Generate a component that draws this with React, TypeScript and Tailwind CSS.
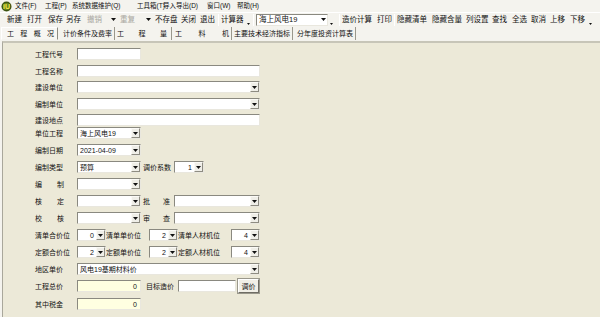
import React from "react";

const Tri = () => (
  <svg width="5" height="3" viewBox="0 0 5 3">
    <path d="M0 0h5L2.5 3z" fill="#111" />
  </svg>
);

const Arrow = () => (
  <span className="flex h-full w-[9px] shrink-0 items-center justify-center border border-t-[#fbfaf6] border-l-[#fbfaf6] border-r-[#8e8c82] border-b-[#8e8c82] bg-[#efeee8]">
    <Tri />
  </span>
);

const Select = ({ w, value, right }: { w: string; value?: string; right?: boolean }) => (
  <div
    className={`flex h-[12px] ${w} shrink-0 border border-t-[#8a8980] border-l-[#8a8980] border-r-[#e9e7de] border-b-[#e9e7de] bg-white`}
  >
    <span className={`flex flex-1 items-center px-[2px] leading-none ${right ? "justify-end" : ""}`}>
      {value}
    </span>
    <Arrow />
  </div>
);

const Input = ({ w, value, yellow }: { w: string; value?: string; yellow?: boolean }) => (
  <div
    className={`flex h-[12px] ${w} shrink-0 items-center justify-end border border-t-[#8a8980] border-l-[#8a8980] border-r-[#e9e7de] border-b-[#e9e7de] px-[3px] leading-none ${
      yellow ? "bg-[#ffffe1]" : "bg-white"
    }`}
  >
    {value}
  </div>
);

const Label = ({ text, w = "w-[42px]", spread }: { text: string; w?: string; spread?: boolean }) => (
  <div className={`flex h-[12px] ${w} shrink-0 items-center leading-none`}>
    {spread ? (
      <span className="flex w-[29px] justify-between">
        {text.split("").map((c, i) => (
          <span key={i}>{c}</span>
        ))}
      </span>
    ) : (
      text
    )}
  </div>
);

const MenuBar = () => {
  const items = [
    ["文件(F)", "w-[30px]"],
    ["工程(P)", "w-[27px]"],
    ["系统数据维护(Q)", "w-[65px]"],
    ["工具箱(T)", "w-[26px]"],
    ["导入导出(D)", "w-[44px]"],
    ["窗口(W)", "w-[30px]"],
    ["帮助(H)", "w-[30px]"],
  ];
  return (
    <div className="flex h-[12px] items-center bg-[#f4f3ee] pl-[1px] text-[6.5px]">
      <svg width="11" height="11" viewBox="0 0 11 11" className="mr-[3px]">
        <circle cx="5.5" cy="5.5" r="5" fill="#3d5410" />
        <circle cx="5.5" cy="5.5" r="3.6" fill="#6b8a1c" />
        <text x="5.5" y="8" textAnchor="middle" fontSize="7" fontWeight="bold" fill="#f3e24a" fontFamily="Liberation Sans">
          iU
        </text>
      </svg>
      {items.map(([t, w]) => (
        <span key={t} className={`${w} shrink-0 whitespace-nowrap leading-none`}>
          {t}
        </span>
      ))}
    </div>
  );
};

const Sep = () => <span className="mx-[2px] h-[12px] w-px shrink-0 border-r border-r-white bg-[#b9b7ab]" />;

const More = () => (
  <span className="flex h-[12px] w-[6px] shrink-0 items-end justify-center pb-[1px]">
    <svg width="3" height="2" viewBox="0 0 3 2">
      <path d="M0 0h3L1.5 2z" fill="#111" />
    </svg>
  </span>
);

const Tool = ({ t, w, gray }: { t: string; w: string; gray?: boolean }) => (
  <span className={`${w} shrink-0 whitespace-nowrap leading-none ${gray ? "text-[#a8a7a0]" : ""}`}>{t}</span>
);

const Toolbar = () => (
  <div className="flex h-[14px] items-center border-t border-t-white bg-[#f4f3ee] pl-[7px] text-[7.5px]">
    <Tool t="新建" w="w-[20px]" />
    <Tool t="打开" w="w-[21px]" />
    <Tool t="保存" w="w-[18px]" />
    <Tool t="另存" w="w-[21px]" />
    <Tool t="撤销" w="w-[19px]" gray />
    <span className="flex w-[14px] justify-center">
      <Tri />
    </span>
    <Tool t="重复" w="w-[26px]" gray />
    <span className="flex w-[9px] justify-start">
      <Tri />
    </span>
    <Tool t="不存盘" w="w-[26px]" />
    <Tool t="关闭" w="w-[19px]" />
    <Tool t="退出" w="w-[16px]" />
    <Sep />
    <Tool t="计算器" w="w-[24px]" />
    <More />
    <Sep />
    <div className="flex h-[12px] w-[72px] shrink-0 border border-t-[#8a8980] border-l-[#8a8980] border-r-[#e9e7de] border-b-[#e9e7de] bg-white">
      <span className="flex flex-1 items-center pl-[2px] leading-none">海上风电19</span>
      <span className="flex w-[8px] items-center justify-center">
        <Tri />
      </span>
    </div>
    <More />
    <span className="w-[3px]" />
    <Sep />
    <Tool t="造价计算" w="w-[35px]" />
    <Tool t="打印" w="w-[15px]" />
    <Sep />
    <Tool t="隐藏清单" w="w-[35px]" />
    <Tool t="隐藏含量" w="w-[34px]" />
    <Tool t="列设置" w="w-[26px]" />
    <Tool t="查找" w="w-[20px]" />
    <Tool t="全选" w="w-[19px]" />
    <Tool t="取消" w="w-[19px]" />
    <Tool t="上移" w="w-[20px]" />
    <Tool t="下移" w="w-[17px]" />
    <More />
  </div>
);

const Tab = ({ t, w, spread, active, pad }: { t: string; w: string; spread?: boolean; active?: boolean; pad: string }) => (
  <div
    className={`flex h-[13px] ${w} shrink-0 items-center ${pad} leading-none ${
      active
        ? "border border-t-white border-l-white border-r-[#8e8c82] border-b-[#f4f3ee] bg-[#f7f6f2]"
        : "border-r border-r-[#9a988c]"
    } ${spread ? "justify-between" : "justify-center"}`}
  >
    {spread ? t.split("").map((c, i) => <span key={i}>{c}</span>) : t}
  </div>
);

const Tabs = () => (
  <div className="flex h-[15px] items-end bg-[#f4f3ee] pb-px pl-[1px] text-[7px]">
    <Tab t="工程概况" w="w-[57px]" spread active pad="pl-[5px] pr-[3px]" />
    <Tab t="计价条件及费率" w="w-[57px]" pad="pl-[3px]" />
    <Tab t="工程量" w="w-[57px]" spread pad="pl-[2px] pr-[4px]" />
    <Tab t="工料机" w="w-[60px]" spread pad="pl-[3px] pr-[2px]" />
    <Tab t="主要技术经济指标" w="w-[61px]" pad="px-[1px]" />
    <Tab t="分年度投资计算表" w="w-[63px]" pad="pl-[2px]" />
  </div>
);

const Row = ({ h, children }: { h: string; children: React.ReactNode }) => (
  <div className={`flex ${h} items-start pt-[3px]`}>{children}</div>
);

const Form = () => (
  <div className="ml-[2px] flex-1 border-l border-t-2 border-l-[#a9a79b] border-t-[#c7c5b8] bg-[#ece9d8] pl-[32px] pt-[2px]">
    <Row h="h-[17px]">
      <Label text="工程代号" />
      <Input w="w-[64px]" />
    </Row>
    <Row h="h-[16px]">
      <Label text="工程名称" />
      <Input w="w-[183px]" />
    </Row>
    <Row h="h-[17px]">
      <Label text="建设单位" />
      <Select w="w-[183px]" />
    </Row>
    <Row h="h-[16px]">
      <Label text="编制单位" />
      <Select w="w-[183px]" />
    </Row>
    <Row h="h-[13px]">
      <Label text="建设地点" />
      <Input w="w-[183px]" />
    </Row>
    <Row h="h-[17px]">
      <Label text="单位工程" />
      <Select w="w-[64px]" value="海上风电19" />
    </Row>
    <Row h="h-[17px]">
      <Label text="编制日期" />
      <Select w="w-[64px]" value="2021-04-09" />
    </Row>
    <Row h="h-[17px]">
      <Label text="编制类型" />
      <Select w="w-[64px]" value="预算" />
      <span className="w-[2px]" />
      <Label text="调价系数" w="w-[31px]" />
      <Select w="w-[30px]" value="1" right />
    </Row>
    <Row h="h-[17px]">
      <Label text="编制" spread />
      <Select w="w-[64px]" />
    </Row>
    <Row h="h-[17px]">
      <Label text="核定" spread />
      <Select w="w-[64px]" />
      <span className="w-[2px]" />
      <div className="flex h-[12px] w-[31px] shrink-0 items-center leading-none">
        <span className="flex w-[27px] justify-between">
          <span>批</span>
          <span>准</span>
        </span>
      </div>
      <Select w="w-[86px]" />
    </Row>
    <Row h="h-[17px]">
      <Label text="校核" spread />
      <Select w="w-[64px]" />
      <span className="w-[2px]" />
      <div className="flex h-[12px] w-[31px] shrink-0 items-center leading-none">
        <span className="flex w-[27px] justify-between">
          <span>审</span>
          <span>查</span>
        </span>
      </div>
      <Select w="w-[86px]" />
    </Row>
    <Row h="h-[17px]">
      <Label text="清单合价位" />
      <Select w="w-[29px]" value="0" right />
      <Label text="清单单价位" w="w-[43px]" />
      <Select w="w-[29px]" value="2" right />
      <Label text="清单人材机位" w="w-[53px]" />
      <Select w="w-[29px]" value="4" right />
    </Row>
    <Row h="h-[17px]">
      <Label text="定额合价位" />
      <Select w="w-[29px]" value="2" right />
      <Label text="定额单价位" w="w-[43px]" />
      <Select w="w-[29px]" value="2" right />
      <Label text="定额人材机位" w="w-[53px]" />
      <Select w="w-[29px]" value="4" right />
    </Row>
    <Row h="h-[17px]">
      <Label text="地区单价" />
      <Select w="w-[183px]" value="风电19基期材料价" />
    </Row>
    <Row h="h-[18px]">
      <Label text="工程总价" />
      <Input w="w-[64px]" value="0" yellow />
      <span className="w-[5px]" />
      <Label text="目标造价" w="w-[32px]" />
      <Input w="w-[58px]" />
      <button className="-mt-px ml-[2px] flex h-[14px] w-[21px] items-center justify-center border border-t-white border-l-white border-r-[#6f6d64] border-b-[#6f6d64] bg-[#f1efe6] text-[7px] leading-none outline outline-[#9a988c]">
        调价
      </button>
    </Row>
    <Row h="h-[17px]">
      <Label text="其中税金" />
      <Input w="w-[64px]" value="0" yellow />
    </Row>
  </div>
);

export default function App() {
  return (
    <div className="flex h-[317px] w-[600px] flex-col overflow-hidden bg-[#f4f3ee] font-['Liberation_Sans','Noto_Sans_CJK_SC',sans-serif] text-[7px] text-[#111]">
      <MenuBar />
      <Toolbar />
      <Tabs />
      <Form />
    </div>
  );
}
